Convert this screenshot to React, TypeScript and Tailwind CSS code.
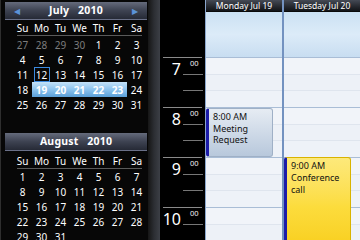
import React from "react";

const FONT = { fontFamily: '"Noto Sans", "Open Sans", sans-serif' };

type Cell = { d: number; muted?: boolean };

const july: Cell[][] = [
  [{ d: 27, muted: true }, { d: 28, muted: true }, { d: 29, muted: true }, { d: 30, muted: true }, { d: 1 }, { d: 2 }, { d: 3 }],
  [4, 5, 6, 7, 8, 9, 10].map((d) => ({ d })),
  [11, 12, 13, 14, 15, 16, 17].map((d) => ({ d })),
  [18, 19, 20, 21, 22, 23, 24].map((d) => ({ d })),
  [25, 26, 27, 28, 29, 30, 31].map((d) => ({ d })),
];

const august: (number | null)[][] = [
  [1, 2, 3, 4, 5, 6, 7],
  [8, 9, 10, 11, 12, 13, 14],
  [15, 16, 17, 18, 19, 20, 21],
  [22, 23, 24, 25, 26, 27, 28],
  [29, 30, 31, null, null, null, null],
];

const dayNames = ["Su", "Mo", "Tu", "We", "Th", "Fr", "Sa"];

function MonthHeader({ title, arrows }: { title: string; arrows?: boolean }) {
  return (
    <div className="h-[18px] mr-[1px] flex items-center justify-between px-[9px] bg-linear-to-b from-[#656b7c] via-[#3e4352] to-[#262a36] border-b border-[#6a7088]">
      <span className={arrows ? "text-[#5b93d8] text-[8px]" : "invisible text-[8px]"}>◀</span>
      <span className="text-white text-[10.5px] font-bold tracking-[0.2px] whitespace-pre">{title}</span>
      <span className={arrows ? "text-[#5b93d8] text-[8px]" : "invisible text-[8px]"}>▶</span>
    </div>
  );
}

function DayNames() {
  return (
    <div className="ml-[8px] w-[133px]">
      <div className="grid grid-cols-7 h-[14px] items-center text-white text-[10px] leading-none">
        {dayNames.map((n) => (
          <div key={n} className="text-center">{n}</div>
        ))}
      </div>
      <div className="h-px mx-[4px] bg-[#5a5a5a]" />
    </div>
  );
}

function July() {
  return (
    <div>
      <div className="pt-[2px]">
        <MonthHeader title="July   2010" arrows />
      </div>
      <div className="pt-[1px]">
        <DayNames />
      </div>
      <div className="ml-[8px] w-[133px] pt-[1px]">
        {july.map((row, ri) => (
          <div key={ri} className="grid grid-cols-7 h-[15px] text-[10px] leading-none">
            {row.map((c, ci) => {
              const hl = ri === 3 && ci >= 1 && ci <= 5;
              const sel = ri === 2 && ci === 1;
              return (
                <div
                  key={ci}
                  className={
                    "flex items-center justify-center " +
                    (hl ? "bg-linear-to-b from-[#c4e2f8] via-[#8cc3ee] to-[#5a9fd8] text-white font-bold " : "") +
                    (c.muted ? "text-[#7d7d7d]" : "text-white")
                  }
                >
                  <span
                    className={
                      sel
                        ? "w-[16px] h-[15px] flex items-center justify-center border border-[#3b8ae0]"
                        : ""
                    }
                  >
                    {c.d}
                  </span>
                </div>
              );
            })}
          </div>
        ))}
      </div>
    </div>
  );
}

function August() {
  return (
    <div className="pt-[21px]">
      <MonthHeader title="August   2010" />
      <div className="pt-[3px]">
        <DayNames />
      </div>
      <div className="ml-[8px] w-[133px]">
        {august.map((row, ri) => (
          <div key={ri} className="grid grid-cols-7 h-[15px] text-[10px] leading-none text-white">
            {row.map((d, ci) => (
              <div key={ci} className="flex items-center justify-center">
                {d ?? ""}
              </div>
            ))}
          </div>
        ))}
      </div>
    </div>
  );
}

function TimeColumn() {
  const hours = [7, 8, 9, 10];
  return (
    <div className="w-[45px] shrink-0 bg-black flex flex-col">
      <div className="h-[57px] shrink-0" />
      {hours.map((h) => (
        <div key={h} className="h-[50px] shrink-0 flex flex-col">
          <div className="h-px mx-[3px] bg-[#8a8a8a]" />
          <div className="flex">
            <div className="w-[21px] text-right text-white text-[16px] leading-none pt-[3px]">{h}</div>
            <div className="w-[20px] ml-[2px] flex flex-col">
              <div className="h-[16px] text-[#f2f2f2] text-[7.5px] leading-none pl-[7px] pt-[2px]">00</div>
              <div className="h-px bg-[#777]" />
              <div className="h-[15px]" />
              <div className="h-px bg-[#777]" />
            </div>
          </div>
        </div>
      ))}
    </div>
  );
}

function Slots() {
  return (
    <>
      <div className="h-[45px] shrink-0 bg-linear-to-b from-[#cbe1f3] via-[#dcebf8] to-[#c8ddf1]" />
      {[0, 1, 2, 3].map((h) => (
        <div key={h} className="h-[50px] shrink-0 flex flex-col border-t border-[#a9bdd6]">
          <div className="h-[17px] bg-[#f1f4f9] border-b border-[#dfe5ee]" />
          <div className="h-[16px] bg-[#edf1f7] border-b border-[#dfe5ee]" />
          <div className="flex-1 bg-[#eef2f8]" />
        </div>
      ))}
    </>
  );
}

function DayColumn({ title, children, last }: { title: string; children?: React.ReactNode; last?: boolean }) {
  return (
    <div className={"flex-1 flex flex-col min-w-0 " + (last ? "" : "border-r-2 border-[#7392c0]")}>
      <div className="h-[12px] shrink-0 bg-linear-to-b from-[#454a55] to-[#121418] text-white text-[8.5px] leading-[12px] text-center border-b border-[#0a0a0a]">
        {title}
      </div>
      <div className="relative flex-1 flex flex-col overflow-hidden">
        <Slots />
        {children}
      </div>
    </div>
  );
}

export default function App() {
  return (
    <div className="w-[360px] h-[240px] flex overflow-hidden bg-black" style={FONT}>
      <div className="w-[148px] shrink-0 bg-[#070707] pl-[4px] border-l border-[#2e2e2e]">
        <July />
        <August />
      </div>
      <div className="w-[12px] shrink-0 bg-linear-to-r from-[#161616] via-[#2c2e33] to-[#3c3f46]" />
      <TimeColumn />
      <div className="flex-1 flex border-l border-[#8aa6cc]">
        <DayColumn title="Monday Jul 19">
          <div className="absolute left-0 top-[96px] w-[67px] h-[49px] rounded-[3px] border border-[#9fb0c6] border-l-[3px] border-l-[#1c1ca8] bg-linear-to-b from-[#e6ecf3] to-[#b8c8dc] pl-[4px] pt-[2px] text-[9px] leading-[11.5px] text-[#111]">
            <div>8:00 AM</div>
            <div>Meeting</div>
            <div>Request</div>
          </div>
        </DayColumn>
        <DayColumn title="Tuesday Jul 20" last>
          <div className="absolute left-0 top-[145px] w-[67px] h-[100px] rounded-[3px] border border-[#d9b300] border-l-[3px] border-l-[#1c1ca8] bg-linear-to-b from-[#fde97a] via-[#fcdc3c] to-[#f7cc10] pl-[4px] pt-[2px] text-[9px] leading-[12px] text-[#111]">
            <div>9:00 AM</div>
            <div>Conference</div>
            <div>call</div>
          </div>
        </DayColumn>
      </div>
    </div>
  );
}
